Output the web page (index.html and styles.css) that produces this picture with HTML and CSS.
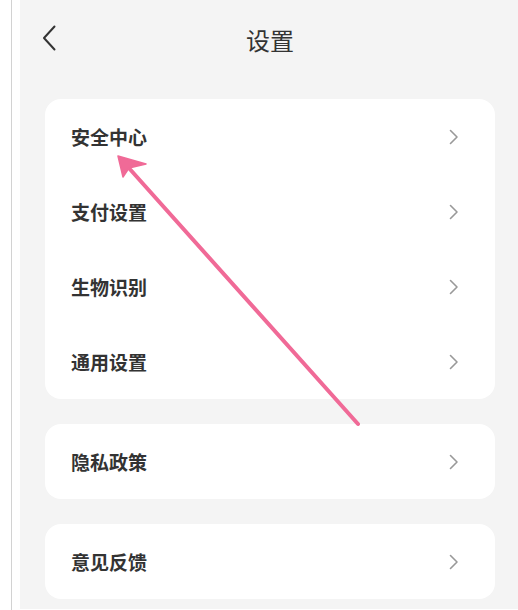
FILE: index.html
```html
<!DOCTYPE html>
<html lang="zh-CN">
<head>
<meta charset="utf-8">
<link rel="stylesheet" href="styles.css">
</head>
<body>
<div class="frame">
  <div class="screen">
    <header class="topbar">
      <svg class="back" width="14" height="26" viewBox="0 0 14 26"><path d="M12.5 1.5 L2 13 L12.5 24.5" fill="none" stroke="#333" stroke-width="2" stroke-linecap="round" stroke-linejoin="round"/></svg>
      <h1 class="title">设置</h1>
    </header>
    <main class="content">
      <section class="card">
        <div class="row"><span class="label">安全中心</span><svg class="chev" width="10" height="16" viewBox="0 0 10 16"><path d="M1.5 1.5 L8 8 L1.5 14.5" fill="none" stroke="#999" stroke-width="1.6" stroke-linecap="round" stroke-linejoin="round"/></svg></div>
        <div class="row"><span class="label">支付设置</span><svg class="chev" width="10" height="16" viewBox="0 0 10 16"><path d="M1.5 1.5 L8 8 L1.5 14.5" fill="none" stroke="#999" stroke-width="1.6" stroke-linecap="round" stroke-linejoin="round"/></svg></div>
        <div class="row"><span class="label">生物识别</span><svg class="chev" width="10" height="16" viewBox="0 0 10 16"><path d="M1.5 1.5 L8 8 L1.5 14.5" fill="none" stroke="#999" stroke-width="1.6" stroke-linecap="round" stroke-linejoin="round"/></svg></div>
        <div class="row"><span class="label">通用设置</span><svg class="chev" width="10" height="16" viewBox="0 0 10 16"><path d="M1.5 1.5 L8 8 L1.5 14.5" fill="none" stroke="#999" stroke-width="1.6" stroke-linecap="round" stroke-linejoin="round"/></svg></div>
      </section>
      <section class="card">
        <div class="row"><span class="label">隐私政策</span><svg class="chev" width="10" height="16" viewBox="0 0 10 16"><path d="M1.5 1.5 L8 8 L1.5 14.5" fill="none" stroke="#999" stroke-width="1.6" stroke-linecap="round" stroke-linejoin="round"/></svg></div>
      </section>
      <section class="card">
        <div class="row"><span class="label">意见反馈</span><svg class="chev" width="10" height="16" viewBox="0 0 10 16"><path d="M1.5 1.5 L8 8 L1.5 14.5" fill="none" stroke="#999" stroke-width="1.6" stroke-linecap="round" stroke-linejoin="round"/></svg></div>
      </section>
    </main>
  </div>
</div>
<svg class="annotation" width="518" height="610" viewBox="0 0 518 610">
  <line x1="358" y1="424" x2="128" y2="167" stroke="#f06a97" stroke-width="4" stroke-linecap="round"/>
  <polygon points="118,156 146,164 129,168 123,177" fill="#f06a97" stroke="#f06a97" stroke-width="1.5" stroke-linejoin="round"/>
</svg>
</body>
</html>
```

FILE: styles.css
```css
* { box-sizing: border-box; }
html, body { margin: 0; padding: 0; background: #fff; }
body {
  width: 518px;
  height: 610px;
  overflow: hidden;
  position: relative;
  font-family: "Noto Sans CJK SC", "Noto Sans", sans-serif;
  color: #333;
}
.frame {
  margin-left: 11px;
  border-left: 1px solid #d2d2d2;
  padding-left: 8px;
  height: 610px;
}
.screen {
  width: 500px;
  height: 609px;
  background: #f4f4f4;
}
.topbar {
  height: 80px;
  position: relative;
  display: flex;
  align-items: center;
  justify-content: center;
}
.back {
  position: absolute;
  left: 22px;
  top: 25px;
}
.title {
  margin: 0;
  font-size: 24px;
  font-weight: 400;
  color: #333;
  line-height: 1;
}
.content {
  padding: 19px 25px 0;
  display: flex;
  flex-direction: column;
  gap: 25px;
}
.card {
  background: #fff;
  border-radius: 16px;
}
.row {
  height: 75px;
  display: flex;
  align-items: center;
  justify-content: space-between;
  padding: 0 36px 0 26px;
}
.label {
  font-size: 19px;
  font-weight: 700;
  color: #333;
}
.chev { display: block; }
.annotation {
  position: absolute;
  left: 0;
  top: 0;
  pointer-events: none;
}
```
